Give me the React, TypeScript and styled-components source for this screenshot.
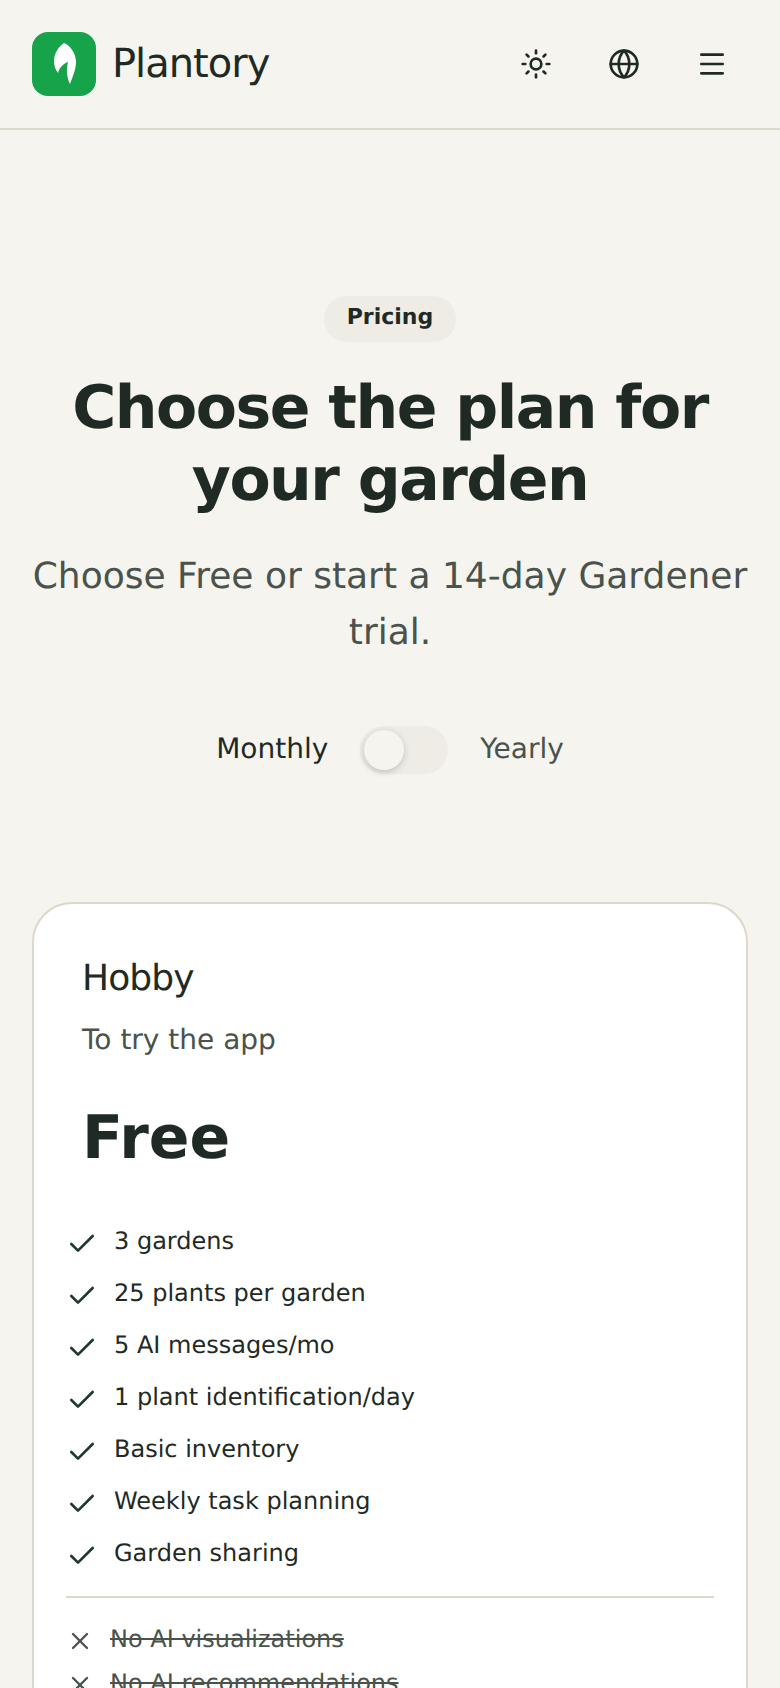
import React from "react";
import styled, { createGlobalStyle } from "styled-components";
import { Sun, Globe, Menu, Check, X } from "lucide-react";

const Global = createGlobalStyle`
  html, body { margin: 0; padding: 0; background: #f5f4ef; }
  body { font-family: "DejaVu Sans", sans-serif; color: #1f2a24; text-rendering: geometricPrecision; }
  #root { height: 1688px; overflow: hidden; }
  * { box-sizing: border-box; }
`;

const Header = styled.header`
  height: 130px;
  padding: 32px 32px 0;
  display: flex;
  justify-content: space-between;
  align-items: flex-start;
  border-bottom: 2px solid #ddd8cc;
`;
const Brand = styled.div`
  display: flex;
  align-items: center;
  gap: 16px;
  height: 64px;
`;
const LogoBox = styled.div`
  width: 64px;
  height: 64px;
  border-radius: 16px;
  background: #16a34a;
  display: flex;
  align-items: center;
  justify-content: center;
`;
const BrandName = styled.span`
  font-size: 40px;
  letter-spacing: -0.025em;
  line-height: 64px;
  color: #1f2a24;
`;
const Actions = styled.nav`
  display: flex;
  gap: 16px;
`;
const IconButton = styled.button`
  width: 72px;
  height: 64px;
  padding: 0;
  border: 0;
  background: transparent;
  color: #1f2a24;
  display: flex;
  align-items: center;
  justify-content: center;
`;
const Hero = styled.section`
  padding: 166px 32px 0;
  display: flex;
  flex-direction: column;
  align-items: center;
  text-align: center;
`;
const Badge = styled.span`
  height: 46px;
  width: 132px;
  border-radius: 23px;
  background: #eeece5;
  font-size: 22px;
  font-weight: 700;
  line-height: 44px;
  color: #1f2a24;
`;
const Title = styled.h1`
  margin: 30px 0 0;
  font-size: 60px;
  letter-spacing: -0.025em;
  line-height: 72px;
  font-weight: 700;
  color: #1f2a24;
`;
const Subtitle = styled.p`
  margin: 33px 0 0;
  font-size: 36px;
  line-height: 56px;
  color: #4a524c;
`;
const BillingRow = styled.div`
  margin-top: 65px;
  display: flex;
  align-items: center;
  gap: 32px;
`;
const BillingLabel = styled.span<{ $active?: boolean }>`
  font-size: 28px;
  line-height: 48px;
  margin-top: -2px;
  color: ${(p) => (p.$active ? "#1f2a24" : "#4a524c")};
`;
const Toggle = styled.div`
  width: 88px;
  height: 48px;
  border-radius: 24px;
  background: #eeece5;
  padding: 4px;
`;
const Thumb = styled.div`
  width: 40px;
  height: 40px;
  border-radius: 50%;
  background: #f5f4ef;
  box-shadow: 0 2px 6px rgba(31, 42, 36, 0.22);
`;
const Card = styled.article`
  margin: 128px 32px 0;
  padding: 53px 32px 0;
  height: 1000px;
  background: #fff;
  border: 2px solid #ddd8cc;
  border-radius: 40px;
`;
const PlanName = styled.h2`
  margin: 0 0 0 16px;
  font-size: 36px;
  letter-spacing: -0.025em;
  line-height: 44px;
  font-weight: 400;
  color: #1f2a24;
`;
const PlanNote = styled.p`
  margin: 17px 0 0 16px;
  font-size: 28px;
  line-height: 44px;
  color: #4a524c;
`;
const Price = styled.div`
  margin: 34px 0 0 16px;
  font-size: 60px;
  line-height: 84px;
  font-weight: 700;
  color: #1f2a24;
`;
const FeatureList = styled.ul`
  list-style: none;
  margin: 35px 0 0;
  padding: 0;
`;
const Feature = styled.li`
  height: 52px;
  display: flex;
  align-items: center;
  gap: 16px;
  font-size: 24px;
  color: #1f2a24;
`;
const Divider = styled.hr`
  margin: 17px 0 19px;
  border: 0;
  border-top: 2px solid #ddd8cc;
`;
const MissingList = styled.ul`
  list-style: none;
  margin: 0;
  padding: 0;
`;
const Missing = styled.li`
  height: 44px;
  display: flex;
  align-items: center;
  gap: 16px;
  font-size: 24px;
  color: #4a524c;
  text-decoration: line-through;
`;
const MarkSlot = styled.span`
  flex: none;
  margin-top: 6px;
  display: flex;
  color: #1f3a2c;
`;
const CrossSlot = styled.span`
  flex: none;
  margin-top: 4px;
  display: flex;
  color: #4a524c;
`;

const Leaf = () => (
  <svg width="64" height="64" viewBox="0 0 64 64">
    <path
      fill="#fff"
      d="M32 11 C26 15 22 22 22 29 C22 34 23.5 38 26 41 C27 36 31 32 36 30 C34 38 35 46 38 52 C41 44 44 37 44 30 C44 22 39 14 32 11 Z"
    />
  </svg>
);

const included = [
  "3 gardens",
  "25 plants per garden",
  "5 AI messages/mo",
  "1 plant identification/day",
  "Basic inventory",
  "Weekly task planning",
  "Garden sharing",
];
const excluded = ["No AI visualizations", "No AI recommendations"];

export default function App() {
  return (
    <>
      <Global />
      <Header>
        <Brand>
          <LogoBox>
            <Leaf />
          </LogoBox>
          <BrandName>Plantory</BrandName>
        </Brand>
        <Actions>
          <IconButton aria-label="Theme"><Sun size={32} /></IconButton>
          <IconButton aria-label="Language"><Globe size={32} /></IconButton>
          <IconButton aria-label="Menu"><Menu size={32} /></IconButton>
        </Actions>
      </Header>
      <main>
        <Hero>
          <Badge>Pricing</Badge>
          <Title>Choose the plan for your garden</Title>
          <Subtitle>Choose Free or start a 14-day Gardener trial.</Subtitle>
          <BillingRow>
            <BillingLabel $active>Monthly</BillingLabel>
            <Toggle><Thumb /></Toggle>
            <BillingLabel>Yearly</BillingLabel>
          </BillingRow>
        </Hero>
        <Card>
          <PlanName>Hobby</PlanName>
          <PlanNote>To try the app</PlanNote>
          <Price>Free</Price>
          <FeatureList>
            {included.map((t) => (
              <Feature key={t}><MarkSlot><Check size={32} /></MarkSlot>{t}</Feature>
            ))}
          </FeatureList>
          <Divider />
          <MissingList>
            {excluded.map((t) => (
              <Missing key={t}><CrossSlot><X size={28} /></CrossSlot>{t}</Missing>
            ))}
          </MissingList>
        </Card>
      </main>
    </>
  );
}
